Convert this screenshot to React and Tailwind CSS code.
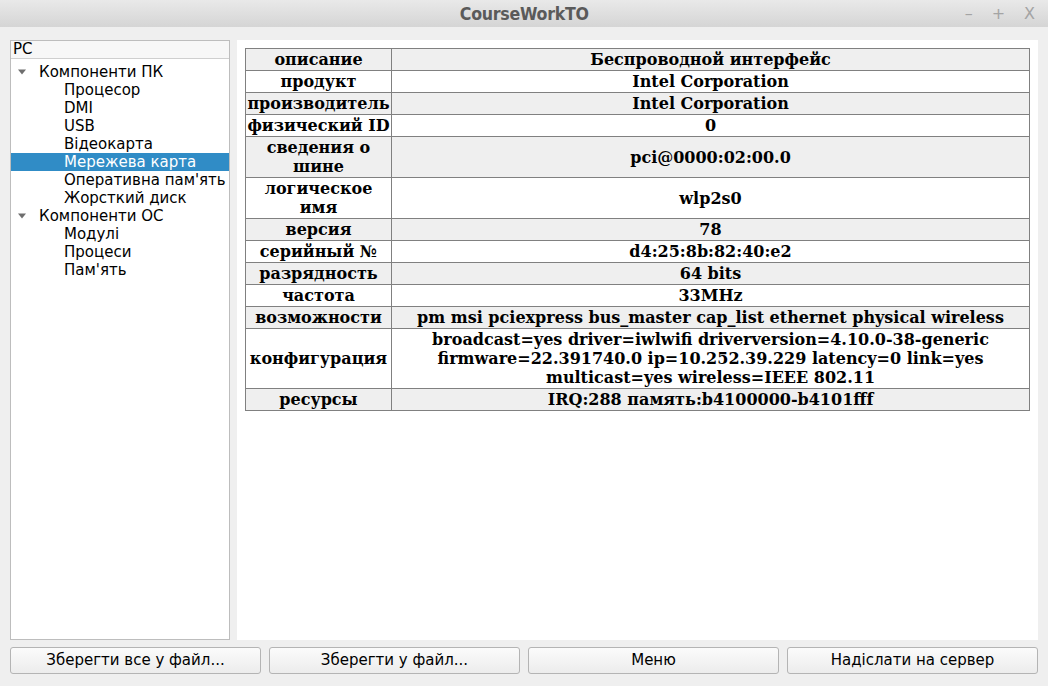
import React from 'react';

const TREE = [
  { label: 'Компоненти ПК', level: 1 },
  { label: 'Процесор', level: 2 },
  { label: 'DMI', level: 2 },
  { label: 'USB', level: 2 },
  { label: 'Відеокарта', level: 2 },
  { label: 'Мережева карта', level: 2, selected: true },
  { label: "Оперативна пам'ять", level: 2 },
  { label: 'Жорсткий диск', level: 2 },
  { label: 'Компоненти ОС', level: 1 },
  { label: 'Модулі', level: 2 },
  { label: 'Процеси', level: 2 },
  { label: "Пам'ять", level: 2 },
];

const ROWS = [
  ['описание', 'Беспроводной интерфейс'],
  ['продукт', 'Intel Corporation'],
  ['производитель', 'Intel Corporation'],
  ['физический ID', '0'],
  ['сведения о шине', 'pci@0000:02:00.0'],
  ['логическое имя', 'wlp2s0'],
  ['версия', '78'],
  ['серийный №', 'd4:25:8b:82:40:e2'],
  ['разрядность', '64 bits'],
  ['частота', '33MHz'],
  ['возможности', 'pm msi pciexpress bus_master cap_list ethernet physical wireless'],
  ['конфигурация', 'broadcast=yes driver=iwlwifi driverversion=4.10.0-38-generic firmware=22.391740.0 ip=10.252.39.229 latency=0 link=yes multicast=yes wireless=IEEE 802.11'],
  ['ресурсы', 'IRQ:288 память:b4100000-b4101fff'],
];

const BUTTONS = ['Зберегти все у файл...', 'Зберегти у файл...', 'Меню', 'Надіслати на сервер'];

function Arrow() {
  return (
    <svg width="10" height="6" viewBox="0 0 10 6" className="shrink-0">
      <path d="M1 0.5 L9 0.5 L5 5.5 Z" fill="#6e6e6e" />
    </svg>
  );
}

export default function App() {
  return (
    <div
      className="w-[1048px] h-[686px] flex flex-col bg-[#efefef] overflow-hidden"
      style={{ fontFamily: '"DejaVu Sans", sans-serif' }}
    >
      {/* Title bar */}
      <div className="h-[27px] shrink-0 relative flex items-center justify-center bg-gradient-to-b from-[#e9e9e9] to-[#d5d5d5]">
        <span className="text-[18px] font-bold text-[#5a5a5a] inline-block scale-x-[0.88] tracking-[-0.3px]">
          CourseWorkTO
        </span>
        <div className="absolute right-[13px] top-0 h-full flex items-center gap-[19px] text-[16px] text-[#a4a4a4]">
          <span>–</span>
          <span>+</span>
          <span>X</span>
        </div>
      </div>

      {/* Main */}
      <div className="flex-1 flex gap-[7px] pl-[10px] pr-[10px] pt-[13px] pb-[6px] min-h-0">
        {/* Tree */}
        <div className="w-[220px] shrink-0 bg-white border border-[#bdbdbd] flex flex-col">
          <div className="h-[18px] bg-[#f7f7f7] border-b border-[#cfcfcf] pl-[2px] text-[15px] leading-[17px] text-black">PC</div>
          <div className="pt-[4px]">
            {TREE.map((t) => (
              <div
                key={t.label}
                className={`h-[18px] flex items-center text-[15px] leading-[18px] whitespace-nowrap ${
                  t.selected ? 'bg-[#308cc6] text-white' : 'text-black'
                }`}
              >
                {t.level === 1 ? (
                  <div className="flex items-center pl-[6px] gap-[12px]">
                    <Arrow />
                    <span>{t.label}</span>
                  </div>
                ) : (
                  <span className="pl-[53px]">{t.label}</span>
                )}
              </div>
            ))}
          </div>
        </div>

        {/* Content */}
        <div className="flex-1 bg-white pl-[8px] pt-[8px] pr-[8px]">
          <table
            className="w-[785px] border-collapse border border-[#808080] text-[16px] leading-[19px] font-bold text-black"
            style={{ fontFamily: '"DejaVu Serif", serif' }}
          >
            <tbody>
              {ROWS.map(([k, v], i) => (
                <tr key={k} className={i % 2 === 0 ? 'bg-[#efefef]' : 'bg-white'}>
                  <td className="w-[146px] border border-[#808080] py-[1px] px-[1px] text-center align-middle">{k}</td>
                  <td className="border border-[#808080] py-[1px] px-[2px] text-center align-middle">{v}</td>
                </tr>
              ))}
            </tbody>
          </table>
        </div>
      </div>

      {/* Buttons */}
      <div className="h-[40px] shrink-0 flex gap-[8px] px-[10px] pt-[1px]">
        {BUTTONS.map((b) => (
          <button
            key={b}
            className="flex-1 h-[27px] rounded-[3px] border border-[#b4b4b4] bg-gradient-to-b from-[#fbfbfb] to-[#ececec] text-[15px] text-black"
          >
            {b}
          </button>
        ))}
      </div>
    </div>
  );
}
